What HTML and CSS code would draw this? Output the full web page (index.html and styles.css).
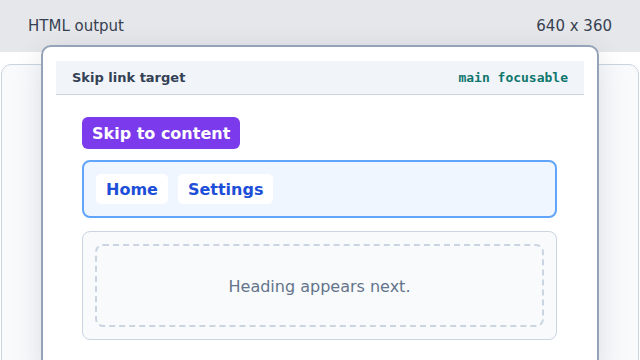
FILE: index.html
```html
<!DOCTYPE html>
<html lang="en">
<head>
  <meta charset="UTF-8">
  <meta name="viewport" content="width=device-width, initial-scale=1.0">
  <title>Skip link target</title>
  <link rel="stylesheet" href="styles.css">
</head>
<body>
  <header class="topBar">
    <span>HTML output</span>
    <span>640 x 360</span>
  </header>

  <section class="stage">
    <div class="backCard"></div>
  </section>

  <article class="panel">
    <div class="panelHeader">
      <span class="panelTitle">Skip link target</span>
      <code class="panelTag">main focusable</code>
    </div>

    <div class="panelBody">
      <div class="skipRow">
        <a href="#main" class="skipLink">Skip to content</a>
      </div>

      <nav class="navBox">
        <a href="#" class="navLink">Home</a>
        <a href="#" class="navLink">Settings</a>
      </nav>

      <main id="main" class="mainBox" tabindex="-1">
        <div class="dashedBox">Heading appears next.</div>
      </main>
    </div>
  </article>
</body>
</html>
```

FILE: styles.css
```css
html, body {
  margin: 0;
}

body {
  position: relative;
  height: 360px;
  overflow: hidden;
  font-family: "DejaVu Sans", sans-serif;
  background-color: #ffffff;
}

.topBar {
  height: 52px;
  padding: 0 28px;
  display: flex;
  align-items: center;
  justify-content: space-between;
  background-color: #e5e7eb;
  color: #374151;
  font-size: 15px;
}

.stage {
  height: 308px;
  padding-top: 12px;
  box-sizing: border-box;
  overflow: hidden;
}

.backCard {
  height: 320px;
  margin: 0 1px;
  border: 1px solid #cbd5e1;
  border-radius: 10px;
  background-color: #f8fafc;
}

/* panel floats over the stage, runs off the bottom */
.panel {
  position: absolute;
  left: 41px;
  top: 45px;
  width: 558px;
  height: 330px;
  box-sizing: border-box;
  padding: 14px 13px;
  border: 2px solid #94a3b8;
  border-radius: 10px;
  background-color: #ffffff;
  box-shadow: 0 8px 30px rgba(15, 23, 42, 0.12);
}

.panelHeader {
  height: 34px;
  box-sizing: border-box;
  padding: 0 16px;
  display: flex;
  align-items: center;
  justify-content: space-between;
  background-color: #f1f5f9;
  border-bottom: 1px solid #cbd5e1;
}

.panelTitle {
  font-size: 13px;
  font-weight: 700;
  color: #334155;
}

.panelTag {
  font-family: "DejaVu Sans Mono", monospace;
  font-size: 13px;
  font-weight: 700;
  color: #0f766e;
}

.panelBody {
  padding: 22px 27px 0 26px;
  display: flex;
  flex-direction: column;
}

.skipRow {
  display: flex;
  margin-bottom: 11px;
}

.skipLink {
  height: 32px;
  padding: 0 10px;
  display: flex;
  align-items: center;
  border-radius: 6px;
  background-color: #7c3aed;
  color: #ffffff;
  font-size: 16px;
  font-weight: 700;
  text-decoration: none;
}

.navBox {
  height: 58px;
  box-sizing: border-box;
  padding: 0 12px;
  display: flex;
  align-items: center;
  gap: 10px;
  border: 2px solid #60a5fa;
  border-radius: 8px;
  background-color: #eff6ff;
  margin-bottom: 13px;
}

.navLink {
  height: 30px;
  padding: 0 10px;
  display: flex;
  align-items: center;
  border-radius: 5px;
  background-color: #ffffff;
  color: #1d4ed8;
  font-size: 16px;
  font-weight: 700;
  text-decoration: none;
}

.mainBox {
  padding: 12px;
  border: 1px solid #cbd5e1;
  border-radius: 8px;
  background-color: #f8fafc;
  outline: none;
}

.dashedBox {
  height: 83px;
  box-sizing: border-box;
  display: flex;
  align-items: center;
  justify-content: center;
  padding-top: 2px;
  border: 2px dashed #cbd5e1;
  border-radius: 8px;
  color: #64748b;
  font-size: 16px;
}
```
